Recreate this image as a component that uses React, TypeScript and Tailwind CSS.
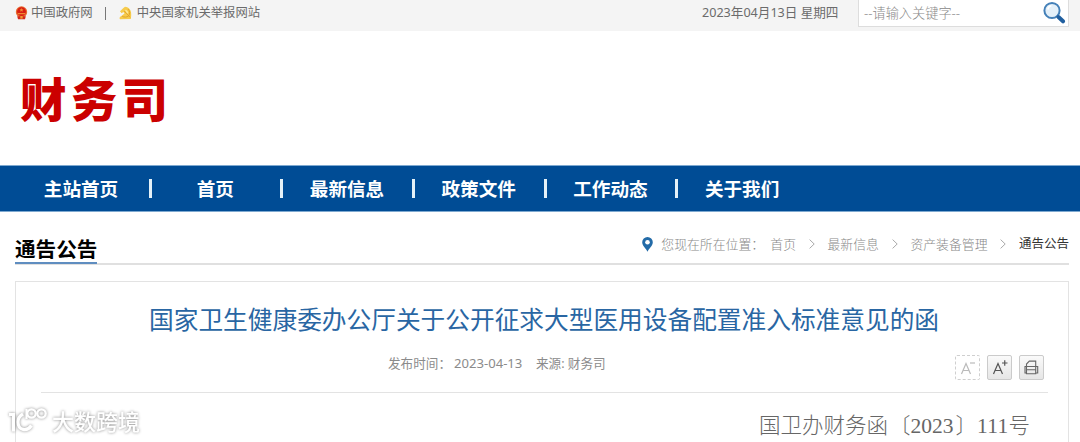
import type { ReactNode } from "react";

const navItems = ["首页", "最新信息", "政策文件", "工作动态", "关于我们"];
const crumbs = ["首页", "最新信息", "资产装备管理"];

function EmblemIcon() {
  return (
    <svg className="w-[13px] h-[14px]" viewBox="0 0 13 14">
      <circle cx="6.5" cy="6" r="5.7" fill="#e8672c" />
      <circle cx="6.5" cy="5.6" r="4.4" fill="#d91e12" />
      <path d="M3 7h7v1.2H3zM6.5 2l.6 1.3 1.4.1-1 1 .3 1.4-1.3-.7-1.3.7.3-1.4-1-1 1.4-.1z" fill="#f08a34" />
      <path d="M2.2 10.2h8.6l-.8 3H3z" fill="#d3281b" />
      <path d="M5.3 10h2.4v2.6H5.3z" fill="#ee9b32" />
    </svg>
  );
}

function PartyIcon() {
  return (
    <svg className="w-[13px] h-[14px]" viewBox="0 0 13 14">
      <path d="M6 .8c4.300.4 6.300 3.600 6.200 7.400 0 2-.2 3.400-.4 4.800L1 13.300c-.9-1-.3-2.500 1-3L5.500 7.500 4.400 6 2.600 7.200 1 5.300 4.400 2z" fill="#f6cb4c" />
      <path d="M5.200 5l5.800 6.300M9 3c2 2 2.300 5 .5 7-1.700 1.400-4.300 1.300-6.300.4" stroke="#e2a52c" strokeWidth="1" fill="none" />
      <path d="M6.500 4.200c1.200.600 2 1.800 1.900 3" stroke="#fff0ae" strokeWidth="1.200" fill="none" />
    </svg>
  );
}

function SearchIcon() {
  return (
    <svg className="w-6 h-6" viewBox="0 0 24 24" fill="none">
      <circle cx="10" cy="10.500" r="7.600" fill="#e4f0f9" stroke="#4480b8" strokeWidth="2" />
      <path d="M5.800 9.500c.4-2 1.700-3.400 3.600-3.700" stroke="#fff" strokeWidth="1.500" />
      <path d="M16.500 17l4.500 4.300" stroke="#205f9f" strokeWidth="4" strokeLinecap="round" />
    </svg>
  );
}

function PinIcon() {
  return (
    <svg className="w-[11px] h-[15px]" viewBox="0 0 11 15">
      <path d="M5.500 0A5.300 5.300 0 0 0 .2 5.300C.2 8.700 4 11.500 5.500 14.800 7 11.500 10.800 8.700 10.800 5.300A5.300 5.300 0 0 0 5.500 0z" fill="#236ba8" />
      <circle cx="5.500" cy="5.200" r="2.300" fill="#fff" />
    </svg>
  );
}

function Chevron() {
  return (
    <svg className="w-[6px] h-[10px]" viewBox="0 0 6 10" fill="none" stroke="#aaa">
      <path d="M.6.600 5.200 5 .6 9.400" />
    </svg>
  );
}

function ToolButton({ dashed, children }: { dashed?: boolean; children: ReactNode }) {
  return (
    <button
      className={
        dashed
          ? "w-[25px] h-[25px] border border-dashed border-[#cfcfcf] rounded-[2px]"
          : "w-[25px] h-[25px] border border-[#cbcbcb] rounded-[2px] bg-gradient-to-b from-[#fafafa] to-[#e6e6e6]"
      }
    >
      {children}
    </button>
  );
}

function LetterIcon({ plus }: { plus?: boolean }) {
  return (
    <svg className="w-[23px] h-[23px]" viewBox="0 0 23 23" fill="none" stroke={plus ? "#555" : "#bbb"} strokeWidth="1.200">
      <path d="M5.500 18 10 7.500 14.500 18M7.200 14.500h5.600" />
      <path d={plus ? "M14 7h5.500M16.750 4.300v5.400" : "M14 7h5"} />
    </svg>
  );
}

function PrinterIcon() {
  return (
    <svg className="w-[23px] h-[23px]" viewBox="0 0 23 23" fill="none" stroke="#666" strokeWidth="1.100">
      <path d="M6.500 10.500V8l2.800-2.900h6.400v5.400M6.500 10.500H5v6.500h1.500M15.700 10.500h2v6.500h-2M6.500 10.500h9.200M6.500 13.800h9.200M6.500 10.500v7.200h9.200v-7.200" />
    </svg>
  );
}

function Watermark() {
  return (
    <div className="absolute left-[8px] top-[405px] flex items-center drop-shadow-[0_0_1.5px_rgba(0,0,0,0.45)]">
      <svg className="w-[40px] h-[32px]" viewBox="0 0 40 32" fill="none" stroke="#fff" strokeWidth="3.200">
        <path d="M1 9.500h4.500v17M15 9c-3.500 2-5 5-5 8 0 8.500 9 10 13.500 3.500" />
        <path d="M18.500 14V4" strokeWidth="2.200" />
        <circle cx="23.500" cy="8.500" r="4.200" strokeWidth="2.300" />
        <circle cx="33.500" cy="8.500" r="4.200" strokeWidth="2.300" />
      </svg>
      <span className="ml-[4px] text-[22px] leading-8 font-medium text-white">大数跨境</span>
    </div>
  );
}

export default function App() {
  return (
    <div className="relative w-[1080px] h-[442px] overflow-hidden bg-white font-['Noto_Sans','Noto_Sans_CJK_SC',sans-serif] whitespace-nowrap">
      {/* Top bar */}
      <div className="h-[31px] bg-[#f4f4f4] flex items-start text-[12.35px] leading-[26px] text-[#6b6b6b]">
        <div className="flex items-center pl-[15px]">
          <EmblemIcon />
          <span className="ml-[3px]">中国政府网</span>
          <span className="w-px h-[13px] bg-[#777] ml-[12px] mr-[13px]"></span>
          <PartyIcon />
          <span className="ml-[5px]">中央国家机关举报网站</span>
        </div>
        <span className="ml-auto w-[156px] text-[12.6px]">2023年04月13日 星期四</span>
        <div className="w-[211px] h-[27px] mr-[11px] bg-white border border-t-0 border-[#ddd] flex items-start">
          <span className="pl-[5px] text-[13.2px] text-[#888] font-light">--请输入关键字--</span>
          <span className="ml-auto mr-[2px]"><SearchIcon /></span>
        </div>
      </div>

      {/* Department name */}
      <div className="h-[134px] pt-[33px] pl-[20px] text-[46.5px] leading-[70px] font-black tracking-[4.3px] text-[#cb0000]">
        财务司
      </div>

      {/* Navigation */}
      <nav className="h-[47px] bg-[#004c95] border-y border-[#7ea9d0] flex items-center pl-[15px] text-[18.6px] font-bold text-white">
        <a className="w-[132px] text-center">主站首页</a>
        {navItems.map((item, i) => (
          <div key={item} className="flex items-center">
            <span className={i === 0 ? "w-[3px] h-[19px] bg-[#e4f1f8] ml-[1.5px]" : "w-[3px] h-[19px] bg-[#e4f1f8]"}></span>
            <a className="w-[128.7px] pr-[1px] text-center">{item}</a>
          </div>
        ))}
      </nav>

      {/* Section title and breadcrumb */}
      <div className="mx-[15px] mr-[11px] h-[53px] border-b-2 border-[#e0e0e0] flex justify-between items-end">
        <h2 className="h-[29px] -mb-[1px] border-b-2 border-[#5f8dc0] text-[20.6px] leading-[28px] font-bold text-black">通告公告</h2>
        <div className="flex items-center h-[37px] text-[12.85px] font-light text-[#888]">
          <PinIcon />
          <span className="ml-[8px] w-[109px]">您现在所在位置：</span>
          {crumbs.map((crumb) => (
            <span key={crumb} className="flex items-center">
              {crumb}
              <span className="ml-[13px] mr-[12.5px]"><Chevron /></span>
            </span>
          ))}
          <span className="text-[12.5px] font-normal text-[#333]">通告公告</span>
        </div>
      </div>

      {/* Article */}
      <div className="ml-[15px] mr-[11px] mt-[16px] h-[200px] border border-[#e3e3e3] pl-[25px] pr-[20px]">
        <h1 className="pt-[20px] pl-[108px] text-[24.7px] leading-[36px] text-[#2966a3]">
          国家卫生健康委办公厅关于公开征求大型医用设备配置准入标准意见的函
        </h1>
        <div className="h-[55px] border-b border-[#e3e3e3] flex text-[12.6px] leading-[51px] text-[#8b8b8b]">
          <span className="ml-[347px] w-[66px]">发布时间：</span>
          <span className="w-[82px] text-[13.1px]">2023-04-13</span>
          <span>来源: 财务司</span>
          <div className="ml-auto mr-[4px] mt-[17px] flex gap-[7px]">
            <ToolButton dashed><LetterIcon /></ToolButton>
            <ToolButton><LetterIcon plus /></ToolButton>
            <ToolButton><PrinterIcon /></ToolButton>
          </div>
        </div>
        <p className="pl-[718px] pt-[17px] font-['Liberation_Serif','Noto_Sans_CJK_SC',serif] text-[21.5px] leading-[32px] font-light text-[#666] flex">
          <span className="w-[130px]">国卫办财务函</span>
          <span className="w-[21.5px] text-right">〔</span>
          <span className="w-[45px]">2023</span>
          <span className="w-[21.5px]">〕</span>
          <span className="tracking-[0.3px]">111号</span>
        </p>
      </div>

      <Watermark />
    </div>
  );
}
